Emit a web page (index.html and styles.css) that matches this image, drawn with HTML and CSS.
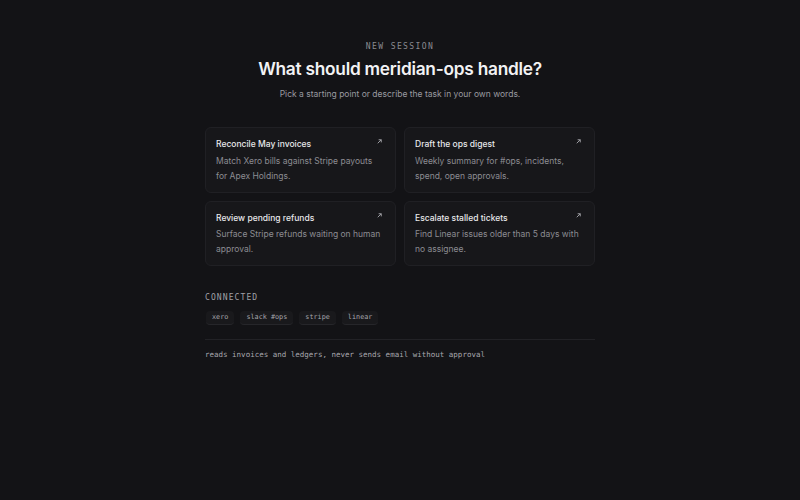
FILE: index.html
```html
<!DOCTYPE html>
<html>
<head>
<meta charset="utf-8">
<link rel="stylesheet" href="styles.css">
</head>
<body>
<main class="page">
  <header class="intro">
    <div class="eyebrow">NEW SESSION</div>
    <h1 class="title">What should meridian-ops handle?</h1>
    <p class="subtitle">Pick a starting point or describe the task in your own words.</p>
  </header>
  <section class="grid">
    <div class="card">
      <div class="card-head"><span class="card-title">Reconcile May invoices</span><svg class="arrow" viewBox="0 0 8 8"><path d="M2 6L6 2M3 2h3v3"/></svg></div>
      <p class="card-desc">Match Xero bills against Stripe payouts for Apex Holdings.</p>
    </div>
    <div class="card">
      <div class="card-head"><span class="card-title">Draft the ops digest</span><svg class="arrow" viewBox="0 0 8 8"><path d="M2 6L6 2M3 2h3v3"/></svg></div>
      <p class="card-desc">Weekly summary for #ops, incidents, spend, open approvals.</p>
    </div>
    <div class="card">
      <div class="card-head"><span class="card-title">Review pending refunds</span><svg class="arrow" viewBox="0 0 8 8"><path d="M2 6L6 2M3 2h3v3"/></svg></div>
      <p class="card-desc">Surface Stripe refunds waiting on human approval.</p>
    </div>
    <div class="card">
      <div class="card-head"><span class="card-title">Escalate stalled tickets</span><svg class="arrow" viewBox="0 0 8 8"><path d="M2 6L6 2M3 2h3v3"/></svg></div>
      <p class="card-desc">Find Linear issues older than 5 days with no assignee.</p>
    </div>
  </section>
  <section class="connected">
    <div class="label">CONNECTED</div>
    <div class="chips">
      <span class="chip">xero</span>
      <span class="chip">slack #ops</span>
      <span class="chip">stripe</span>
      <span class="chip">linear</span>
    </div>
  </section>
  <footer class="policy">reads invoices and ledgers, never sends email without approval</footer>
</main>
</body>
</html>
```
FILE: styles.css
```css
html, body {
  margin: 0;
  padding: 0;
  background: #131316;
  height: 100%;
}
body {
  font-family: Inter, "Noto Sans", sans-serif;
  color: #e6e6e8;
}
.page {
  width: 390px;
  margin: 0 auto;
  padding-top: 41px;
}
.intro {
  text-align: center;
}
.eyebrow {
  font-family: "DejaVu Sans Mono", monospace;
  font-size: 8px;
  letter-spacing: 1.4px;
  color: #8a8a90;
  line-height: 12px;
}
.title {
  margin: 5px 0 0;
  font-size: 17.3px;
  font-weight: 600;
  line-height: 22px;
  color: #f2f2f4;
  letter-spacing: -0.25px;
}
.subtitle {
  margin: 8px 0 0;
  font-size: 8.5px;
  line-height: 13px;
  color: #9a9aa0;
}
.grid {
  margin-top: 26px;
  display: grid;
  grid-template-columns: 1fr 1fr;
  gap: 8px;
}
.card {
  background: #17171a;
  border: 1px solid #202024;
  border-radius: 6px;
  padding: 10px 10px 8px;
}
.card-head {
  display: flex;
  justify-content: space-between;
  align-items: flex-start;
}
.card-title {
  font-size: 8.5px;
  font-weight: 500;
  color: #e8e8ea;
  line-height: 13px;
}
.arrow {
  width: 7px;
  height: 7px;
  margin-top: 0;
  margin-right: 2px;
  fill: none;
  stroke: #a0a0a6;
  stroke-width: 1.1;
}
.card-desc {
  margin: 2.5px 0 0;
  font-size: 8.5px;
  line-height: 15px;
  color: #8c8c92;
}
.connected {
  margin-top: 26px;
}
.label {
  font-family: "DejaVu Sans Mono", monospace;
  font-size: 8px;
  letter-spacing: 1.1px;
  color: #a0a0a6;
  line-height: 12px;
}
.chips {
  display: flex;
  gap: 6px;
  margin-top: 7px;
  padding-left: 1px;
}
.chip {
  font-family: "DejaVu Sans Mono", monospace;
  font-size: 6.8px;
  color: #a6a6ac;
  background: #19191c;
  border-bottom: 1px solid #26262a;
  border-radius: 4px;
  padding: 2px 6px;
  line-height: 9px;
}
.policy {
  margin-top: 14px;
  border-top: 1px solid #222226;
  padding-top: 10px;
  font-family: "DejaVu Sans Mono", monospace;
  font-size: 7.5px;
  line-height: 10px;
  color: #a8a8ae;
}
```
